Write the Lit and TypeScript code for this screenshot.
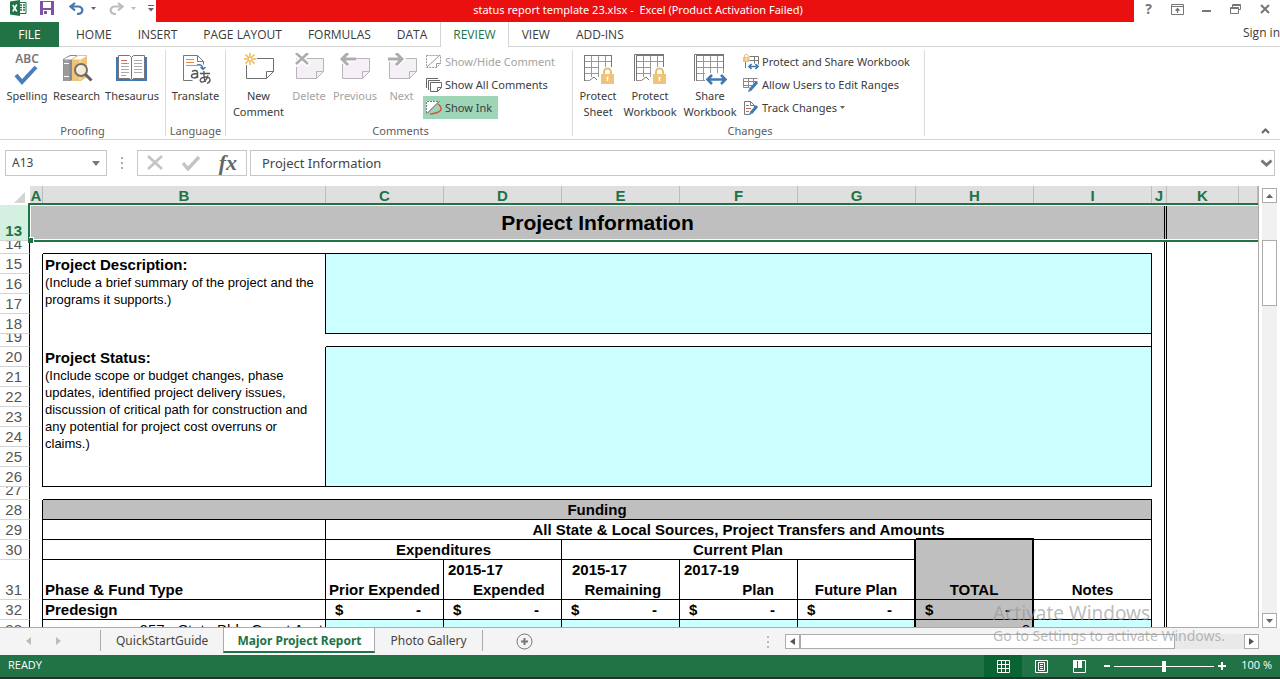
import { LitElement, html, svg, css, nothing, TemplateResult } from "lit";
import { customElement } from "lit/decorators.js";
import { classMap } from "lit/directives/class-map.js";

/* ---------- icon artwork ---------- */

const icon = (w: number, h: number, body: unknown) =>
  html`<svg width=${w} height=${h} viewBox="0 0 ${w} ${h}" fill="none" aria-hidden="true">${body}</svg>`;

const lock = (x: number, y: number, s = 1) => svg`<g transform="translate(${x} ${y}) scale(${s})">
  <path d="M3 7V4a3.5 3.5 0 0 1 7 0v3" stroke="#e9bd6d" stroke-width="2"/>
  <rect x="0" y="6" width="13" height="10" fill="#f0c478"/><path d="M6.5 9v4M5.500 9.500h2" stroke="#fff" stroke-width="1.4"/></g>`;

const excelLogo = icon(17, 16, svg`
  <path d="M8 2.500h8v11H8z" fill="#fff" stroke="#217346"/>
  <path d="M10 5h2M13 5h2M10 7.500h2M13 7.500h2M10 10h2M13 10h2" stroke="#217346" stroke-width="1.500"/>
  <path d="M0 1.500 10 0v16L0 14.500z" fill="#217346"/>
  <path d="m2.800 5 4 6.500M6.800 4.500l-4 7" stroke="#fff" stroke-width="1.600"/>`);
const saveIcon = icon(14, 14, svg`
  <path d="M0 0h14v14H0z" fill="#7c53a5"/><path d="M3 1h8v6H3z" fill="#fff"/><path d="M3 9h8v5H3z" fill="#fff"/><path d="M4 10h3v3H4z" fill="#7c53a5"/>`);
const undoIcon = icon(15, 13, svg`
  <path d="M6 1 1.500 4.500 6 8.500M2 4.500h7c6 0 6 7.500-1 7.500" stroke="#4377ad" stroke-width="2.200"/>`);
const redoIcon = icon(15, 13, svg`
  <path d="m9 1 4.500 3.500L9 8.500M13 4.500H6C0 4.500 0 12 7 12" stroke="#bdbdbd" stroke-width="2.200"/>`);
const caret = (color = "#666") => icon(5, 3, svg`<path d="M0 0h5L2.500 3z" fill=${color}/>`);
const customize = icon(6, 7, svg`<path d="M0 .5h6" stroke="#666"/><path d="M0 3h6L3 6.500z" fill="#666"/>`);

const ribbonOptions = icon(13, 11, svg`
  <path d="M.5.5h12v10H.5zM.5 2.500h12" stroke="#777"/><path d="M6.500 9V4.500M4.500 6.500l2-2 2 2" stroke="#777" stroke-width="1.200"/>`);
const minimizeIcon = icon(10, 10, svg`<path d="M0 7h9" stroke="#777" stroke-width="2"/>`);
const restoreIcon = icon(11, 10, svg`
  <path d="M2.500 3V.5h8v5h-2M2.500 1.500h8" stroke="#777"/><path d="M.5 3.500h8v6h-8zM.5 4.500h8" stroke="#777"/>`);
const closeIcon = icon(10, 10, svg`<path d="m1 1 8 8M9 1 1 9" stroke="#777" stroke-width="2"/>`);

const spelling = html`<span class="abc">ABC</span>${icon(32, 20, svg`<path d="m5 10 6 7L25 2" stroke="#4a7ebb" stroke-width="4"/>`)}`;
const research = icon(32, 32, svg`
  <path d="M2 6 9 2h7v20l-6 6H2z" fill="#8a8a8a"/><path d="M2.500 6.500h6V28h-6z" fill="#9b9b9b"/>
  <path d="M4 5.500 9.500 3h6l-5 3.500H3z" fill="#fff"/><path d="M3 10.500h5M3 23.500h5" stroke="#fff"/>
  <path d="m11 6 6-4h9v22l-6 4h-9z" fill="#eec577"/><path d="M13 5.500 17.500 3h8L20 6.500h-8z" fill="#fff"/><path d="M19 7v20" stroke="#f8e6c2"/>
  <circle cx="20" cy="17" r="6" fill="#f5ead2" stroke="#707070" stroke-width="2"/><path d="M16.500 17a3.500 3.500 0 0 1 3-3.500" stroke="#fff"/>
  <path d="m24.500 21.500 6 6" stroke="#606060" stroke-width="3"/>`);
const thesaurus = icon(32, 32, svg`
  <path d="M0 4h31v24H0z" fill="#3f79b4"/>
  <path d="M2.500 2.500h11l2 2 2-2h11v23h-11l-2 2-2-2h-11z" fill="#fff" stroke="#777"/><path d="M15.500 4.500v22" stroke="#777"/>
  <path d="M5 10.500h8M5 13.500h8M5 16.500h8M5 19.500h8M5 22.500h5M18 7.500h8M18 10.500h8M18 13.500h8M18 16.500h8M18 19.500h8" stroke="#aaa"/>
  <path d="M5 7.500h6" stroke="#d0655a"/><path d="M7 10.500h4" stroke="#c77"/>`);
const translate = icon(32, 32, svg`
  <path d="M3.500 2.500h14l6 6v3M17.500 2.500v6h6M3.500 2.500v25h9" stroke="#777"/>
  <path d="M6 6.500h8M6 9.500h8M6 12.500h11" stroke="#e08b4c"/>
  <path d="M17 12c4-1 6 1 6 4M20.500 14l2.500 2.500 2.500-2.500" stroke="#4377ad" stroke-width="1.400"/>
  <path d="M12 18.500c2-1.500 5.500-1.500 5.500 1V25M17.500 21c-3-.5-6 0-6 2s4 3 6 0" stroke="#555" stroke-width="1.500"/>
  <path d="M20 20.500h10M24 18c-.5 5 0 8 1.500 11M28 22.500c-1 4-4 7-6.500 6.500s-1.500-5 4-5 6 4.500 1.500 6.500" stroke="#555" stroke-width="1.300"/>`);

const notePath = "M3.500 5.500h27v13l-7 7h-20zM23.500 25.500v-7h7";
const newComment = icon(32, 32, svg`
  <path d=${notePath} stroke="#707070" fill="#fff"/><circle cx="7" cy="6" r="7" fill="#fff"/>
  <path d="M7 0v3.500M7 8.500V12M1 6h3.500M9.500 6H13M2.500 1.500l2.600 2.600M9 8l2.600 2.600M11.500 1.500 9 4M5 8l-2.500 2.500" stroke="#f0b95a" stroke-width="1.600"/>
  <circle cx="7" cy="6" r="2" stroke="#f0b95a" stroke-width="1.400"/>`);
const dimNote = svg`<path d=${notePath} stroke="#b9b4ba" fill="#f4f0f5"/>`;
const deleteComment = icon(32, 32, svg`${dimNote}
  <path d="m2 0 14 12M15 0 2 12" stroke="#fff" stroke-width="6"/><path d="m3 0 12 11M15 0 3 11" stroke="#adadad" stroke-width="2.600"/>`);
const prevComment = icon(32, 32, svg`${dimNote}
  <path d="M17 6H3M9 0 3 6l6 6" stroke="#fff" stroke-width="6"/><path d="M17 6H4M9 0 3 6l6 6" stroke="#adadad" stroke-width="3"/>`);
const nextComment = icon(32, 32, svg`${dimNote}
  <path d="M2 6h14M10 0l6 6-6 6" stroke="#fff" stroke-width="6"/><path d="M2 6h13M10 0l6 6-6 6" stroke="#adadad" stroke-width="3"/>`);

const sheetGrid = svg`<path d="M3.500 2.500h27v25h-27zM3.500 8.500h27M3.500 14.500h27M3.500 20.500h27M10.500 2.500v25M17.500 2.500v25M24.500 2.500v18" stroke="#999"/><path d="M3.500 28V2.500h27V16" stroke="#777"/>`;
const protectSheet = icon(34, 32, svg`${sheetGrid}<path d="M10 24h8l4 4H9z" fill="#fff"/><path d="m9 27 4-3 3 3" stroke="#777"/><path d="M18 14h16v18H18z" fill="#fff"/>${lock(20, 15)}`);
const protectBook = icon(34, 32, svg`<path d="M1.500 28V1.500H31" stroke="#777"/>${sheetGrid}<path d="M10 24h8l4 4H9z" fill="#fff"/><path d="m9 27 4-3 3 3" stroke="#777"/><path d="M18 14h16v18H18z" fill="#fff"/>${lock(20, 15)}`);
const shareBook = icon(34, 32, svg`<path d="M1.500 28V1.500H31" stroke="#777"/>${sheetGrid}
  <path d="M12 20h22v12H12z" fill="#fff"/><path d="M15 26.500h17M19 22l-4.500 4.500L19 31M28 22l4.500 4.500L28 31" stroke="#3f79b4" stroke-width="2.600"/>`);

const showHide = icon(16, 14, svg`
  <path d="M.5.5h14v8l-4 4H.5z" stroke="#999" stroke-dasharray="2 1"/><path d="m1 12 12-11M10.500 12.500v-4h4" stroke="#999"/>`);
const showAll = icon(16, 14, svg`
  <path d="M.5 10V.5H12M2.500 12V2.500H14" stroke="#666"/><path d="M4.500 4.500h11v5l-4 4h-7zM11.500 13.500v-4h4" stroke="#666" fill="#fff"/>`);
const showInk = icon(16, 14, svg`
  <path d="M0 0h13L1 12H0z" fill="#fff"/><path d="M.5 12V.5h13" stroke="#777" stroke-dasharray="2 1"/><path d="M1 12.500 13 .5" stroke="#666"/>
  <path d="M12 3c3 2 4 5 2 7s-6 2.500-10 3" stroke="#d2573f" stroke-width="1.500"/>`);
const protectShare = icon(16, 16, svg`
  <path d="M6.500 2.500h9v8M6.500 6.500h9M11.500 2.500v7M2.500 8v6" stroke="#777"/>${lock(0, 0, 0.5)}
  <path d="M6 12.500h9M8.500 10 6 12.500 8.500 15M12.500 10l2.500 2.500-2.500 2.500" stroke="#3f79b4" stroke-width="1.700"/>`);
const allowUsers = icon(16, 16, svg`
  <path d="M.5 1.500h14M.5 4.500h14M.5 8.500h9M.5 1.500v9h6M5.500 1.500v9M10.500 1.500v5" stroke="#888"/>
  <path d="m14 5-7 8" stroke="#3f79b4" stroke-width="3"/><path d="m6 12-1 3 3-1z" fill="#3f79b4"/>`);
const trackChanges = icon(16, 16, svg`
  <path d="M1.500 1.500h6l4 4v2M7.500 1.500v4h4M1.500 1.500v13h5" stroke="#777"/><path d="M3 5.500h3M3 8.500h5M3 11.500h3" stroke="#cf6a55"/>
  <path d="m14 6-6 7" stroke="#3f79b4" stroke-width="3"/><path d="m7 12-1 3 3-1z" fill="#3f79b4"/>`);

const cancelIcon = icon(18, 16, svg`<path d="m2 1 14 13M16 1 2 14" stroke="#c4c4c4" stroke-width="2.600"/>`);
const enterIcon = icon(20, 16, svg`<path d="m2 8 5 6L18 2" stroke="#c4c4c4" stroke-width="3.400"/>`);

const tri = (d: string, color: string, w = 8, h = 8) => icon(w, h, svg`<path d=${d} fill=${color}/>`);

/* ---------- ribbon and sheet data ---------- */

interface Command { label: string[]; art: TemplateResult; dim?: boolean; on?: boolean; menu?: boolean }
interface Group { name: string; cls: string; big: Command[]; small: Command[] }

const groups: Group[] = [
  { name: "Proofing", cls: "proofing", small: [], big: [
    { label: ["Spelling"], art: spelling }, { label: ["Research"], art: research }, { label: ["Thesaurus"], art: thesaurus }] },
  { name: "Language", cls: "language", small: [], big: [{ label: ["Translate"], art: translate }] },
  { name: "Comments", cls: "comments",
    big: [
      { label: ["New", "Comment"], art: newComment }, { label: ["Delete"], art: deleteComment, dim: true },
      { label: ["Previous"], art: prevComment, dim: true }, { label: ["Next"], art: nextComment, dim: true }],
    small: [
      { label: ["Show/Hide Comment"], art: showHide, dim: true }, { label: ["Show All Comments"], art: showAll },
      { label: ["Show Ink"], art: showInk, on: true }] },
  { name: "Changes", cls: "changes",
    big: [
      { label: ["Protect", "Sheet"], art: protectSheet }, { label: ["Protect", "Workbook"], art: protectBook },
      { label: ["Share", "Workbook"], art: shareBook }],
    small: [
      { label: ["Protect and Share Workbook"], art: protectShare }, { label: ["Allow Users to Edit Ranges"], art: allowUsers },
      { label: ["Track Changes"], art: trackChanges, menu: true }] },
];

const menuTabs = ["HOME", "INSERT", "PAGE LAYOUT", "FORMULAS", "DATA", "REVIEW", "VIEW", "ADD-INS"];
const columns = ["A", "B", "C", "D", "E", "F", "G", "H", "I", "J", "K", ""];

/* ---------- ribbon ---------- */

@customElement("excel-ribbon")
class ExcelRibbon extends LitElement {
  static styles = css`
    :host { display: block; background: #fff; color: #3b3b3b; font: 11px/16px "Noto Sans", sans-serif; }
    button { font: inherit; color: inherit; background: none; border: 0; padding: 0; margin: 0; }
    svg { display: block; flex: none; }
    .title { display: flex; height: 22px; }
    .quick { display: grid; grid-template-columns: 30px 29px 22px 18px 22px 17px auto; align-items: start; width: 146px; padding: 1px 0 0 10px; }
    .quick > * { height: 14px; display: flex; align-items: center; }
    .caption { flex: 1; background: #ea1010; color: #fff; text-align: center; line-height: 20px; padding-right: 14px; white-space: pre; }
    .window { display: grid; grid-template-columns: repeat(5, 29px); justify-items: center; width: 146px; height: 18px; align-items: center; }
    .help { font-weight: 700; font-size: 14px; color: #777; }
    .tabs { display: flex; height: 25px; border-bottom: 1px solid #d4d4d4; box-sizing: border-box; font: 12px/16px "Open Sans", "Noto Sans", sans-serif; }
    .tab { padding: 0 12px; height: 25px; border: 1px solid transparent; border-top: 0; border-bottom: 0; }
    .tab.file { width: 59px; background: #217346; color: #fff; margin-right: 4px; padding: 0; border: 0; }
    .tab.active { background: #fff; border-color: #d4d4d4; color: #217346; }
    .sign { margin-left: auto; color: #3b3b3b; text-decoration: none; line-height: 21px; }
    .body { display: flex; height: 92px; border-bottom: 1px solid #d4d4d4; }
    .group { display: flex; flex-direction: column; border-right: 1px solid #dcdcdc; margin: 3px 0; box-sizing: border-box; padding-left: 3px; }
    .commands { display: grid; flex: 1; min-height: 0; }
    .proofing { padding-right: 3px; }
    .proofing .commands { grid-template-columns: 48px 51px 60px; }
    .language { padding: 0; }
    .language .commands { grid-template-columns: 59px; }
    .comments .commands { grid-template-columns: 59px 42px 50px 43px 149px; }
    .changes .commands { grid-template-columns: 44px 60px 60px 184px; }
    .name { text-align: center; color: #5c5c5c; line-height: 10px; }
    .big { display: flex; flex-direction: column; align-items: center; white-space: nowrap; }
    .art { height: 32px; margin: 3px 0; display: flex; flex-direction: column; align-items: center; }
    .dim { color: #a3a3a3; }
    .abc { font-size: 12px; line-height: 12px; color: #777; font-weight: 600; }
    .list { display: flex; flex-direction: column; align-items: flex-start; }
    .small { display: flex; align-items: center; gap: 3px; height: 23px; padding: 0 6px 0 3px; white-space: nowrap; }
    .on { background: #9fd5b7; }
    .fold { margin: auto 10px 5px auto; }
  `;

  private big(c: Command) {
    return html`<button class=${classMap({ big: true, dim: !!c.dim })}>
      <span class="art">${c.art}</span>${c.label.map((l) => html`<span>${l}</span>`)}</button>`;
  }

  private small(c: Command) {
    return html`<button class=${classMap({ small: true, dim: !!c.dim, on: !!c.on })}>
      ${c.art}<span>${c.label[0]}</span>${c.menu ? caret() : nothing}</button>`;
  }

  render() {
    return html`
      <header class="title">
        <div class="quick">
          <span>${excelLogo}</span>
          <button aria-label="Save">${saveIcon}</button>
          <button aria-label="Undo">${undoIcon}</button><button aria-label="Undo list">${caret()}</button>
          <button aria-label="Redo">${redoIcon}</button><button aria-label="Redo list">${caret("#bbb")}</button>
          <button aria-label="Customize">${customize}</button>
        </div>
        <div class="caption">status report template 23.xlsx -  Excel (Product Activation Failed)</div>
        <div class="window">
          <button class="help">?</button>
          <button aria-label="Ribbon display options">${ribbonOptions}</button>
          <button aria-label="Minimize">${minimizeIcon}</button>
          <button aria-label="Restore">${restoreIcon}</button>
          <button aria-label="Close">${closeIcon}</button>
        </div>
      </header>
      <nav class="tabs">
        <button class="tab file">FILE</button>
        ${menuTabs.map((t) => html`<button class=${classMap({ tab: true, active: t === "REVIEW" })}>${t}</button>`)}
        <a class="sign" href="#">Sign in</a>
      </nav>
      <div class="body">
        ${groups.map((g) => html`<section class="group ${g.cls}">
          <div class="commands">
            ${g.big.map((c) => this.big(c))}
            ${g.small.length ? html`<div class="list">${g.small.map((c) => this.small(c))}</div>` : nothing}
          </div>
          <div class="name">${g.name}</div>
        </section>`)}
        <button class="fold" aria-label="Collapse ribbon">${icon(9, 6, svg`<path d="m1 5 3.500-3.500L8 5" stroke="#666" stroke-width="2"/>`)}</button>
      </div>`;
  }
}

/* ---------- formula bar ---------- */

@customElement("formula-bar")
class FormulaBar extends LitElement {
  static styles = css`
    :host { display: flex; height: 26px; padding: 10px 5px; font: 12px/16px "Noto Sans", sans-serif; }
    .box { display: flex; align-items: center; border: 1px solid #c6c6c6; box-sizing: border-box; background: #fff; }
    .name { width: 102px; padding: 0 6px; }
    input { font: inherit; color: #444; border: 0; padding: 0; margin: 0; background: none; min-width: 0; flex: 1; outline: 0; }
    button { background: none; border: 0; padding: 0; margin: 0; color: #666; }
    svg { display: block; }
    .grip { width: 30px; display: flex; align-items: center; justify-content: center; }
    .actions { width: 110px; justify-content: space-between; padding: 0 9px 0 8px; margin-right: 3px; }
    .fx { font: italic 700 22px/22px "Liberation Serif", serif; }
    .formula { flex: 1; padding: 0 1px 0 11px; font-size: 13px; }
  `;

  render() {
    return html`
      <div class="box name">
        <input aria-label="Name box" value="A13" />
        <button aria-label="Names">${tri("M0 0h8L4 5z", "#777", 8, 5)}</button>
      </div>
      <div class="grip">${icon(2, 12, svg`<path d="M0 1h2M0 6h2M0 11h2" stroke="#aaa" stroke-width="2"/>`)}</div>
      <div class="box actions">
        <button aria-label="Cancel">${cancelIcon}</button>
        <button aria-label="Enter">${enterIcon}</button>
        <button class="fx">fx</button>
      </div>
      <div class="box formula">
        <input aria-label="Formula" value="Project Information" />
        <button aria-label="Expand">${icon(13, 8, svg`<path d="m1.500 1.500 5 4.500 5-4.500" stroke="#777" stroke-width="3"/>`)}</button>
      </div>`;
  }
}

/* ---------- worksheet ---------- */

@customElement("work-sheet")
class WorkSheet extends LitElement {
  static styles = css`
    :host { display: flex; min-height: 0; font: 15px/17px "Liberation Sans", Arial, sans-serif; color: #000; }
    svg { display: block; }
    .view { flex: 1; position: relative; overflow: hidden; border-right: 1px solid #ababab; border-bottom: 1px solid #ababab; }
    table { table-layout: fixed; width: 100%; border-collapse: separate; border-spacing: 0; }
    .c-head { width: 30px; } .c-a { width: 13px; } .c-b { width: 283px; } .c-n { width: 118px; } .c-j { width: 15px; } .c-k { width: 72px; }
    th, td { padding: 0; box-sizing: border-box; overflow: hidden; white-space: nowrap; }
    thead th { height: 19px; background: #dfdfdf; color: #217346; border-right: 1px solid #bcbcbc; vertical-align: middle; }
    thead .corner { background: #fff; border: 0; }
    .corner svg { margin: 3px 0 0 14px; }
    tbody th { color: #555; font-weight: 400; border-right: 1px solid #000; border-bottom: 1px solid #d4d4d4; vertical-align: bottom; }
    .num { display: flex; align-items: flex-end; justify-content: flex-end; overflow: hidden; padding-right: 7px; line-height: 19px; }
    .h13 { height: 12px; } .h20 { height: 19px; } .h36 { height: 35px; } .h40 { height: 39px; }
    tbody .picked { background: #d3f0e0; color: #217346; font-weight: 700; }
    td { vertical-align: bottom; padding-bottom: 1px; }
    .r { border-right: 1px solid #000; }
    .b { border-bottom: 1px solid #000; }
    .rr { border-right: 2px solid #000; }
    .double { border-right: 3px double #000; }
    .gray { background: #bfbfbf; }
    .shade { background: #c6c6c6; }
    .cyan { background: #ccffff; }
    .bold { font-weight: 700; }
    .center { text-align: center; }
    .left { padding-left: 2px; }
    .right { text-align: right; padding-right: 2px; }
    .thick { box-shadow: 0 -2px #000; }
    .tall { padding: 0; }
    .lines { white-space: pre; line-height: 20px; height: 39px; padding-left: 4px; }
    .lines.inset { padding-left: 10px; }
    .big { font-size: 21px; line-height: 32px; vertical-align: middle; }
    .note { font-size: 13px; line-height: 17px; white-space: normal; vertical-align: top; padding-left: 2px; }
    .money { display: flex; justify-content: space-between; padding: 0 22px 0 9px; }
    .selection { position: absolute; left: 28px; right: 0; top: 17px; height: 39px; box-sizing: border-box; border: 2px solid #217346; border-right: 0; box-shadow: inset 1px 1px #fff, inset 0 -1px #fff; pointer-events: none; }
    .handle { position: absolute; left: -2px; bottom: -3px; width: 5px; height: 5px; background: #217346; box-shadow: 1px -1px #fff; }
    .vbar { width: 15px; margin: 2px 3px 0; display: flex; flex-direction: column; background: #f1f1f1; }
    .arrow, .thumb { border: 1px solid #ababab; background: #fff; box-sizing: border-box; padding: 0; display: flex; align-items: center; justify-content: center; }
    .arrow { height: 15px; flex: none; }
    .thumb { height: 66px; margin-top: 37px; }
    .vbar .arrow:last-child { margin-top: auto; }
  `;

  private row(n: number, size: string, cells: TemplateResult) {
    return html`<tr>
      <th scope="row" class=${classMap({ picked: n === 13 })}><div class="num ${size}">${n}</div></th>
      ${cells}</tr>`;
  }

  private tail = html`<td class="double"></td><td></td><td></td>`;
  private money = html`<div class="money"><span>$</span><span>-</span></div>`;

  private plain(n: number) {
    return this.row(n, "h20", html`<td class="r"></td>${this.tail}`);
  }

  render() {
    return html`
      <div class="view">
        <table>
          <colgroup>
            <col class="c-head" /><col class="c-a" /><col class="c-b" />
            ${Array.from({ length: 7 }, () => html`<col class="c-n" />`)}
            <col class="c-j" /><col class="c-k" /><col />
          </colgroup>
          <thead><tr>
            <th class="corner">${tri("M11 0v11H0z", "#d4d4d4", 11, 11)}</th>
            ${columns.map((c) => html`<th scope="col">${c}</th>`)}
          </tr></thead>
          <tbody>
            ${this.row(13, "h36", html`<td class="gray"></td><td class="gray bold center big" colspan="8">Project Information</td>
              <td class="gray double"></td><td class="shade"></td><td class="shade"></td>`)}
            ${this.row(14, "h13", html`<td></td><td class="b" colspan="8"></td>${this.tail}`)}
            ${this.row(15, "h20", html`<td class="r"></td><td class="bold left r">Project Description:</td>
              <td class="cyan r b" colspan="7" rowspan="4"></td>${this.tail}`)}
            ${this.row(16, "h20", html`<td class="r"></td><td class="note r" rowspan="3">(Include a brief summary of the project and the programs it supports.)</td>${this.tail}`)}
            ${this.plain(17)} ${this.plain(18)}
            ${this.row(19, "h13", html`<td class="r"></td><td></td><td class="r b" colspan="7"></td>${this.tail}`)}
            ${this.row(20, "h20", html`<td class="r"></td><td class="bold left r">Project Status:</td>
              <td class="cyan r b" colspan="7" rowspan="7"></td>${this.tail}`)}
            ${this.row(21, "h20", html`<td class="r"></td><td class="note r b" rowspan="6">(Include scope or budget changes, phase updates, identified project delivery issues, discussion of critical path for construction and any potential for project cost overruns or claims.)</td>${this.tail}`)}
            ${[22, 23, 24, 25, 26].map((n) => this.plain(n))}
            ${this.row(27, "h13", html`<td></td><td class="b" colspan="8"></td>${this.tail}`)}
            ${this.row(28, "h20", html`<td class="r"></td><td class="gray bold center r b" colspan="8">Funding</td>${this.tail}`)}
            ${this.row(29, "h20", html`<td class="r"></td><td class="r b"></td><td class="bold center r b" colspan="7">All State &amp; Local Sources, Project Transfers and Amounts</td>${this.tail}`)}
            ${this.row(30, "h20", html`<td class="r"></td><td class="r b"></td>
              <td class="bold center r b" colspan="2">Expenditures</td><td class="bold center rr b" colspan="3">Current Plan</td>
              <td class="gray bold center rr b thick" rowspan="2">TOTAL</td><td class="bold center r b" rowspan="2">Notes</td>${this.tail}`)}
            ${this.row(31, "h40", html`<td class="r"></td><td class="bold left r b">Phase &amp; Fund Type</td>
              <td class="bold center r b">Prior Expended</td>
              <td class="bold tall r b"><div class="lines">2015-17<br />${"      "}Expended</div></td>
              <td class="bold tall r b"><div class="lines inset">2015-17<br />${"   "}Remaining</div></td>
              <td class="bold tall r b"><div class="lines">2017-19<br />${"              "}Plan</div></td>
              <td class="bold center rr b">Future Plan</td>${this.tail}`)}
            ${this.row(32, "h20", html`<td class="r"></td><td class="bold left r b">Predesign</td>
              ${[0, 1, 2, 3].map(() => html`<td class="bold r b">${this.money}</td>`)}
              <td class="bold rr b">${this.money}</td><td class="gray bold rr b">${this.money}</td><td class="r b"></td>${this.tail}`)}
            ${this.row(33, "h20", html`<td class="r"></td><td class="right r b">057  -  State Bldg Const Acct</td>
              ${[0, 1, 2, 3].map(() => html`<td class="cyan r b"></td>`)}
              <td class="cyan rr b"></td><td class="gray right rr b">0</td><td class="cyan r b"></td>${this.tail}`)}
          </tbody>
        </table>
        <div class="selection"><span class="handle"></span></div>
      </div>
      <div class="vbar">
        <button class="arrow" aria-label="Scroll up">${tri("M0 4h7L3.500 0z", "#666", 7, 4)}</button>
        <div class="thumb"></div>
        <button class="arrow" aria-label="Scroll down">${tri("M0 0h7L3.500 4z", "#666", 7, 4)}</button>
      </div>`;
  }
}

/* ---------- sheet tabs and status bar ---------- */

@customElement("sheet-footer")
class SheetFooter extends LitElement {
  static styles = css`
    :host { display: block; font: 12px/16px "Noto Sans", sans-serif; color: #444; border-bottom: 2px solid #20352a; }
    button { font: inherit; color: inherit; background: none; border: 0; padding: 0; margin: 0; }
    svg { display: block; }
    .tabs { display: flex; height: 27px; background: #f4f4f4; align-items: flex-start; }
    .arrows { display: flex; gap: 23px; width: 100px; box-sizing: border-box; padding: 0 0 0 26px; height: 25px; align-items: center; }
    .tab { padding: 0 15px; height: 26px; }
    .tab.active { background: #fff; color: #217346; font-weight: 700; padding: 2px 13px 0; height: 25px; border: 1px solid #ababab; border-top: 0; border-bottom: 2px solid #217346; }
    .sep { width: 1px; height: 21px; background: #ababab; margin-top: 2px; }
    .add { margin: 5px 0 0 33px; }
    .dots { margin: 8px 16px 0 auto; }
    .hbar { display: flex; width: 37%; height: 15px; margin: 6px 21px 0 0; background: #e9e9e9; }
    .arrow, .thumb { border: 1px solid #ababab; background: #fff; box-sizing: border-box; }
    .arrow { width: 15px; display: flex; align-items: center; justify-content: center; }
    .thumb { width: 79%; }
    .hbar .arrow:last-child { margin-left: auto; }
    .status { display: flex; height: 22px; background: #217346; color: #fff; align-items: stretch; font: 11px/20px "Open Sans", "Noto Sans", sans-serif; }
    .ready { padding-left: 8px; flex: 1; }
    .mode { width: 38px; display: flex; align-items: center; justify-content: center; }
    .mode.on { background: #0a6332; }
    .zoom { display: flex; align-items: center; gap: 4px; margin-left: 6px; }
    input { appearance: none; width: 100px; height: 12px; margin: 0; background: linear-gradient(#fff, #fff) center / 100% 1px no-repeat; }
    input::-webkit-slider-thumb { appearance: none; width: 4px; height: 11px; background: #fff; }
    .percent { width: 54px; text-align: right; padding-right: 8px; box-sizing: border-box; }
  `;

  render() {
    return html`
      <nav class="tabs">
        <div class="arrows">
          <button aria-label="Previous sheet">${tri("M5 0v8L0 4z", "#bbb", 6, 8)}</button>
          <button aria-label="Next sheet">${tri("M1 0v8l5-4z", "#bbb", 6, 8)}</button>
        </div>
        <span class="sep"></span>
        <button class="tab">QuickStartGuide</button>
        <button class="tab active">Major Project Report</button>
        <button class="tab">Photo Gallery</button>
        <span class="sep"></span>
        <button class="add" aria-label="New sheet">${icon(17, 17, svg`<circle cx="8.500" cy="8.500" r="7.500" stroke="#777"/><path d="M8.500 5v7M5 8.500h7" stroke="#777" stroke-width="2"/>`)}</button>
        <span class="dots">${icon(2, 12, svg`<path d="M0 1h2M0 6h2M0 11h2" stroke="#bbb" stroke-width="2"/>`)}</span>
        <div class="hbar">
          <button class="arrow" aria-label="Scroll left">${tri("M5 0v7L0 3.500z", "#555", 5, 7)}</button>
          <div class="thumb"></div>
          <button class="arrow" aria-label="Scroll right">${tri("M0 0v7l5-3.500z", "#555", 5, 7)}</button>
        </div>
      </nav>
      <footer class="status">
        <span class="ready">READY</span>
        <button class="mode on" aria-label="Normal view">${icon(13, 13, svg`<path d="M.5.5h12v12H.5zM.5 4.500h12M.5 8.500h12M4.500.5v12M8.500.5v12" stroke="#fff"/>`)}</button>
        <button class="mode" aria-label="Page layout view">${icon(13, 13, svg`<path d="M.5.5h12v12H.5zM3.500 2.500h6v8h-6zM5 4.500h3M5 6.500h3M5 8.500h3" stroke="#fff"/>`)}</button>
        <button class="mode" aria-label="Page break view">${icon(13, 13, svg`<path d="M.5.5h12v12H.5z" stroke="#fff"/><path d="M0 0h4v8H0zM5 0h4v8H5z" fill="#fff"/>`)}</button>
        <div class="zoom">
          <button aria-label="Zoom out">${icon(6, 8, svg`<path d="M0 4h6" stroke="#fff" stroke-width="2"/>`)}</button>
          <input type="range" aria-label="Zoom" min="0" max="100" value="50" />
          <button aria-label="Zoom in">${icon(8, 8, svg`<path d="M0 4h8M4 0v8" stroke="#fff" stroke-width="2"/>`)}</button>
        </div>
        <span class="percent">100 %</span>
      </footer>`;
  }
}

@customElement("app-root")
class AppRoot extends LitElement {
  static styles = css`
    :host { display: flex; flex-direction: column; height: 100vh; background: #fff; position: relative; overflow: hidden; }
    work-sheet { flex: 1; }
    .watermark { position: absolute; right: 55px; bottom: 32px; color: rgba(150, 150, 150, 0.65); font: 14px/22px "Noto Sans", sans-serif; pointer-events: none; }
    .watermark strong { display: block; font-weight: 400; font-size: 19px; line-height: 24px; }
  `;

  render() {
    return html`
      <excel-ribbon></excel-ribbon>
      <formula-bar></formula-bar>
      <work-sheet></work-sheet>
      <sheet-footer></sheet-footer>
      <div class="watermark"><strong>Activate Windows</strong>Go to Settings to activate Windows.</div>`;
  }
}
